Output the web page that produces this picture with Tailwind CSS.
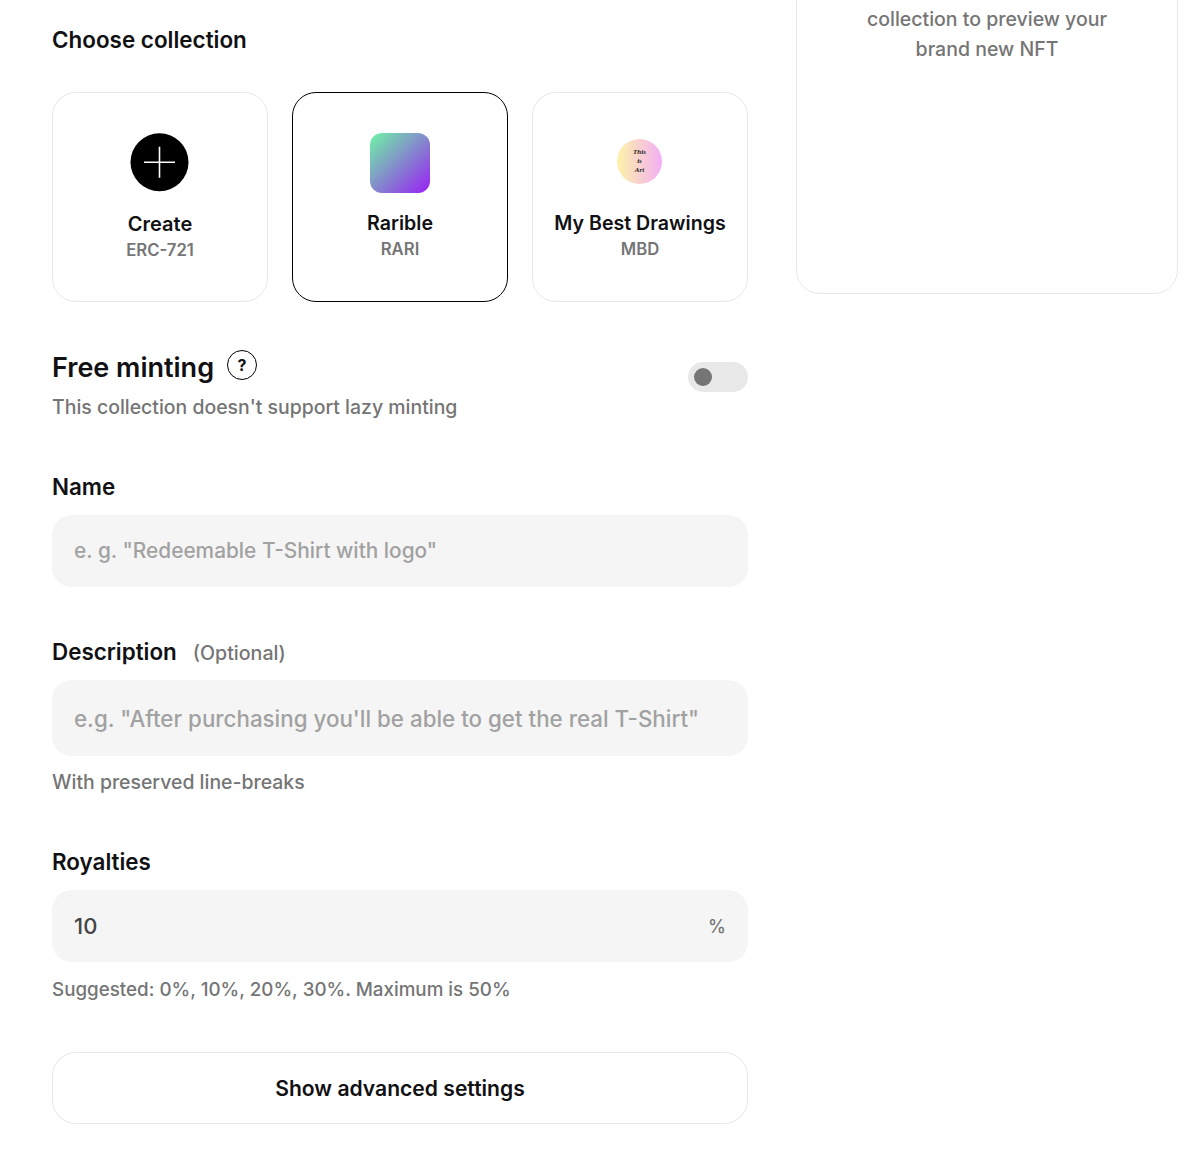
<!DOCTYPE html>
<html>
<head>
<meta charset="utf-8">
<script src="https://cdn.jsdelivr.net/npm/@tailwindcss/browser@4"></script>
</head>
<body class="bg-white overflow-hidden">
<div class="w-[1200px] h-[1166px] overflow-hidden flex items-start pl-[52px] gap-[48px] font-['Inter',sans-serif] text-[#111114]">
  <main class="w-[696px] flex flex-col">
    <h2 class="mt-[26px] text-[22.45px] leading-[28px] font-semibold">Choose collection</h2>
    <div class="mt-[38px] grid grid-cols-3 gap-[24px]">
      <button class="h-[210px] rounded-[24px] border border-[#e8e8e8] flex flex-col items-center">
        <svg class="mt-[40px] w-[60px] h-[60px]" viewBox="0 0 60 60"><circle cx="29.5" cy="29.2" r="29" fill="#000"/><path d="M29.5 13.7V44.7M14 29.2H45" stroke="#fff" stroke-width="1.6" fill="none"/></svg>
        <span class="mt-[19px] text-[20px] leading-[24px] font-semibold">Create</span>
        <span class="mt-[3px] text-[16.7px] leading-[22px] font-semibold text-[#757575]">ERC-721</span>
      </button>
      <button class="h-[210px] rounded-[24px] border border-black flex flex-col items-center">
        <span class="mt-[40px] w-[60px] h-[60px] rounded-[12px] bg-[linear-gradient(135deg,#6ef5a5,#9a1ff5)]"></span>
        <span class="mt-[18px] text-[19.6px] leading-[24px] font-semibold">Rarible</span>
        <span class="mt-[3px] text-[16.7px] leading-[22px] font-semibold text-[#757575]">RARI</span>
      </button>
      <button class="h-[210px] rounded-[24px] border border-[#e8e8e8] flex flex-col items-center">
        <span class="mt-[45.5px] ml-[-1px] w-[45.5px] h-[45.5px] rounded-full bg-[linear-gradient(90deg,#fdf3a8,#f3aef5)] flex flex-col items-center justify-center font-['Liberation_Serif',serif] italic font-bold text-[7px] leading-[9px] text-[#222]"><span>This</span><span>is</span><span>Art</span></span>
        <span class="mt-[27px] text-[19.6px] leading-[24px] font-semibold">My Best Drawings</span>
        <span class="mt-[3px] text-[16.7px] leading-[22px] font-semibold text-[#757575]">MBD</span>
      </button>
    </div>

    <div class="mt-[49px] flex items-start justify-between">
      <div>
        <div class="flex items-start gap-[13px]">
          <h2 class="text-[27px] leading-[34px] font-semibold">Free minting</h2>
          <span class="mt-[-1px] w-[30px] h-[30px] rounded-full border border-black flex items-center justify-center text-[16px] font-bold">?</span>
        </div>
        <p class="mt-[9px] text-[19.45px] leading-[26px] font-medium text-[#757575]">This collection doesn't support lazy minting</p>
      </div>
      <div class="mt-[11px] w-[60px] h-[30px] rounded-full bg-[#e8e8e8] flex items-center pl-[6px]">
        <span class="w-[18px] h-[18px] rounded-full bg-[#757575]"></span>
      </div>
    </div>

    <label class="mt-[53px] text-[22.4px] leading-[28px] font-semibold">Name</label>
    <div class="mt-[14px] h-[72px] rounded-[20px] bg-[#f5f5f5] flex items-center px-[22px] text-[20.85px] font-medium text-[#a1a1a1]">e. g. "Redeemable T-Shirt with logo"</div>

    <div class="mt-[51px] flex items-baseline gap-[16px]">
      <label class="text-[22.4px] leading-[28px] font-semibold">Description</label>
      <span class="text-[19.6px] font-medium text-[#757575]">(Optional)</span>
    </div>
    <div class="mt-[12px] h-[76px] rounded-[20px] bg-[#f5f5f5] flex items-center px-[22px] text-[22.35px] font-medium text-[#a1a1a1]">e.g. "After purchasing you'll be able to get the real T-Shirt"</div>
    <p class="mt-[13px] text-[19.45px] leading-[26px] font-medium text-[#757575]">With preserved line-breaks</p>

    <label class="mt-[53px] text-[22.4px] leading-[28px] font-semibold">Royalties</label>
    <div class="mt-[14px] h-[72px] rounded-[20px] bg-[#f5f5f5] flex items-center justify-between px-[22px] text-[22px] font-medium text-[#444]">
      <span>10</span>
      <span class="text-[18px] text-[#757575]">%</span>
    </div>
    <p class="mt-[15px] text-[18.8px] leading-[26px] font-medium text-[#757575]">Suggested: 0%, 10%, 20%, 30%. Maximum is 50%</p>

    <button class="mt-[49px] h-[72px] rounded-[24px] border border-[#e8e8e8] text-[21.1px] font-semibold">Show advanced settings</button>
  </main>
  <aside class="w-[382px] h-[344px] mt-[-50px] rounded-[24px] border border-[#e8e8e8] pt-[53px] text-center text-[19.5px] leading-[30px] font-medium text-[#757575]">
    collection to preview your<br>brand new NFT
  </aside>
</div>
</body>
</html>
